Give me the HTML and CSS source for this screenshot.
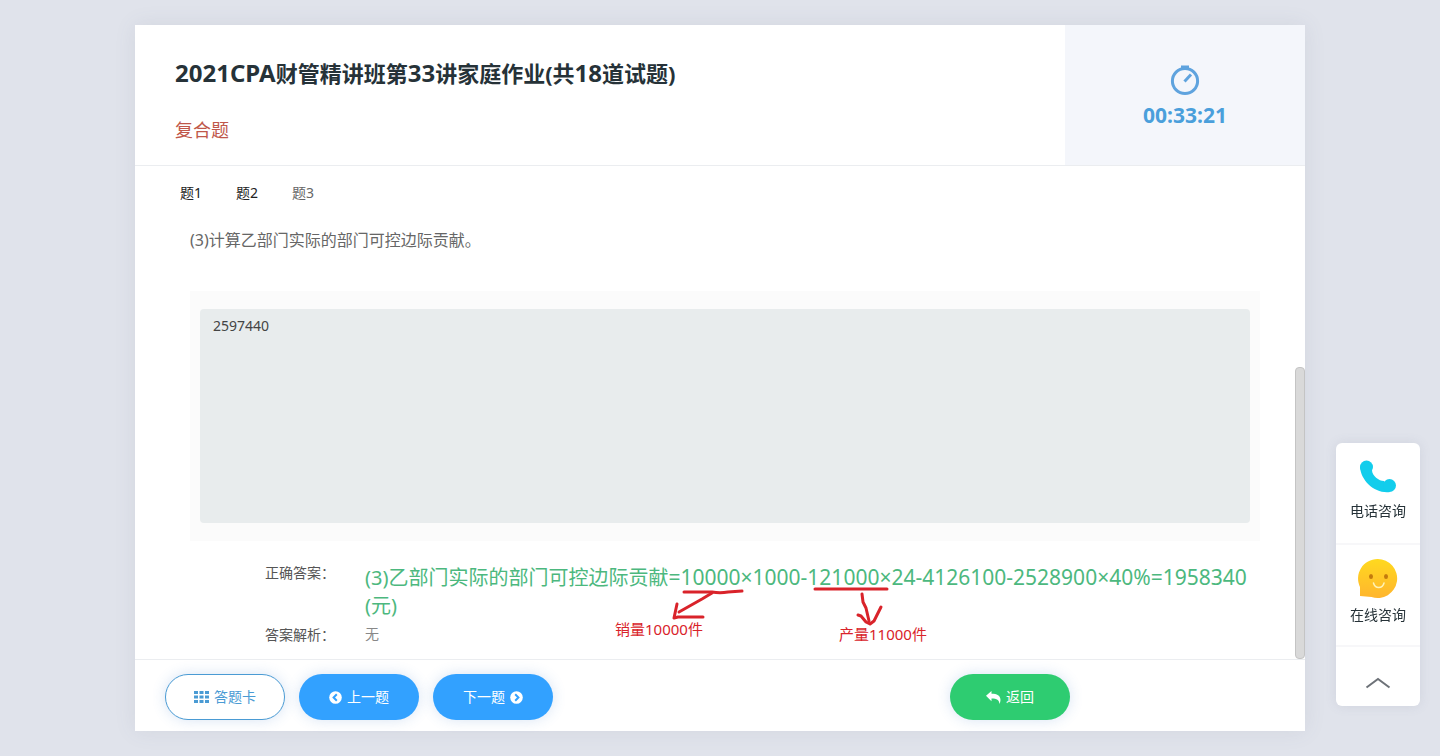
FILE: index.html
```html
<!DOCTYPE html>
<html lang="zh-CN">
<head>
  <meta charset="UTF-8" />
  <meta name="viewport" content="width=device-width, initial-scale=1.0"/>
  <title>2021CPA财管精讲班第33讲家庭作业</title>
  <link rel="stylesheet" href="styles.css">
</head>
<body>
  <div class="paper">
    <header class="paper-header">
      <div class="paper-info">
        <h1><span class="num">2021CPA</span>财管精讲班第<span class="num">33</span>讲家庭作业(共<span class="num">18</span>道试题)</h1>
        <p class="type">复合题</p>
      </div>
      <div class="timer">
        <svg width="30" height="32" viewBox="0 0 30 32" fill="none" stroke="#5fa3de" stroke-width="3">
          <circle cx="15" cy="17" r="12.6"/>
          <path d="M11 3.500h8" stroke-width="4"/>
          <path d="M14.500 17.500l6.500-7"/>
        </svg>
        <span class="time">00:33:21</span>
      </div>
    </header>

    <main class="paper-body">
      <nav class="tabs">
        <a href="#q1">题1</a>
        <a href="#q2">题2</a>
        <a href="#q3" class="current">题3</a>
      </nav>

      <div class="question" id="q3">
        <label class="question-title" for="answer">(3)计算乙部门实际的部门可控边际贡献。</label>
        <div class="answer-box">
          <textarea id="answer" readonly>2597440</textarea>
        </div>
      </div>

      <div class="result">
        <div class="result-row">
          <div class="result-label">正确答案：</div>
          <div class="result-text right-answer">(3)乙部门实际的部门可控边际贡献<span class="formula">=10000×1000-121000×24-4126100-2528900×40%=1958340</span><br>(元)</div>
        </div>
        <div class="result-row">
          <div class="result-label">答案解析：</div>
          <div class="result-text">无</div>
        </div>

        <!-- hand-drawn notes over the answer -->
        <svg class="ink" width="260" height="50" viewBox="0 0 260 50" fill="none" stroke="#d9232a" stroke-width="3" stroke-linecap="round" stroke-linejoin="round">
          <path d="M14 8h28c6 1 10 1 16 0l14-1"/>
          <path d="M42 9L32 15 9 28"/>
          <path d="M7 20L4 34l4-1h25"/>
          <path d="M145 5h72"/>
          <path d="M192 10l1 8 3 6 3 13"/>
          <path d="M188 31l3 1 5 6 4 2 4-3 3-6 4-8"/>
        </svg>
        <span class="note note-sales">销量10000件</span>
        <span class="note note-output">产量11000件</span>
      </div>
      <div class="scroll-thumb"></div>
    </main>

    <footer class="paper-footer">
      <button class="btn btn-outline" type="button">
        <svg width="15" height="12" viewBox="0 0 15 12" fill="currentColor">
          <path d="M0 0h4v3H0zM5.500 0h4v3h-4zM11 0h4v3h-4zM0 4.500h4v3H0zM5.500 4.500h4v3h-4zM11 4.500h4v3h-4zM0 9h4v3H0zM5.500 9h4v3h-4zM11 9h4v3h-4z"/>
        </svg>
        答题卡
      </button>
      <button class="btn btn-blue" type="button">
        <svg width="13" height="13" viewBox="0 0 13 13">
          <circle cx="6.500" cy="6.500" r="6.300" fill="#fff"/>
          <path d="M7.800 3.300L4.600 6.500l3.200 3.200" fill="none" stroke="#32a1ff" stroke-width="2"/>
        </svg>
        上一题
      </button>
      <button class="btn btn-blue" type="button">
        下一题
        <svg width="13" height="13" viewBox="0 0 13 13">
          <circle cx="6.500" cy="6.500" r="6.300" fill="#fff"/>
          <path d="M5.200 3.300l3.200 3.200-3.200 3.200" fill="none" stroke="#32a1ff" stroke-width="2"/>
        </svg>
      </button>
      <button class="btn btn-green" type="button">
        <svg width="15" height="13" viewBox="0 0 15 13" fill="#fff">
          <path d="M0 4.800L5.500 0v2.800c5.500 0 9 1.800 9 6.200 0 1.500-.4 2.800-1 4-.3-3.800-2.500-5.500-8-5.500v2.800z"/>
        </svg>
        返回
      </button>
    </footer>
  </div>

  <aside class="side-bar">
    <a href="#phone" class="side-item">
      <svg width="38" height="36" viewBox="0 0 38 36" fill="#12cdec">
        <path d="M1 8C2 22 16 35 31 33L25 22C20 22 13 17 13 11L8 2z"/>
        <circle cx="7.500" cy="8" r="6.500"/>
        <circle cx="30.500" cy="26.500" r="6.500"/>
      </svg>
      <span>电话咨询</span>
    </a>
    <a href="#online" class="side-item">
      <svg width="40" height="40" viewBox="0 0 40 40">
        <defs>
          <linearGradient id="smile" x1="0" y1="0" x2="0" y2="1">
            <stop offset="0" stop-color="#ffd91f"/>
            <stop offset="1" stop-color="#ffb52e"/>
          </linearGradient>
        </defs>
        <path d="M19.500 0a19.500 19.500 0 1 1-6 38L2 37V28A19.500 19.500 0 0 1 19.500 0z" fill="url(#smile)"/>
        <ellipse cx="13" cy="17.500" rx="2" ry="2.600" fill="#c37a0d"/>
        <ellipse cx="28" cy="17.500" rx="2" ry="2.600" fill="#c37a0d"/>
        <path d="M15.500 24c1.500 6 9 6 10.500 0" fill="none" stroke="#fff3b8" stroke-width="1.500" stroke-linecap="round"/>
      </svg>
      <span>在线咨询</span>
    </a>
    <button class="side-top" type="button" aria-label="返回顶部">
      <svg width="26" height="12" viewBox="0 0 26 12" fill="none" stroke="#6d7278" stroke-width="2">
        <path d="M1.500 10.500L13 2l11.500 8.500"/>
      </svg>
    </button>
  </aside>
</body>
</html>
```
FILE: styles.css
```css
* {
  box-sizing: border-box;
}

body {
  margin: 0;
  padding: 25px 0;
  height: 100vh;
  background-color: #e0e3eb;
  font-family: "Noto Sans", "Noto Sans CJK SC", sans-serif;
  font-size: 14px;
  line-height: 20px;
  color: #555;
}

a {
  color: inherit;
  text-decoration: none;
}

.paper {
  display: flex;
  flex-direction: column;
  max-width: 1170px;
  height: 100%;
  margin: 0 auto;
  background-color: #fff;
  box-shadow: 0 0 20px rgba(90, 100, 130, 0.1);
}

.paper-header {
  display: flex;
  border-bottom: 1px solid #ebedf0;
}

.paper-info {
  flex: 1;
  padding: 31px 40px 20px;
}

.paper-info h1 {
  margin: 0 0 25px;
  font-size: 22px;
  line-height: 34px;
  font-weight: bold;
  color: #263238;
}

.paper-info h1 .num {
  font-size: 24px;
  line-height: 24px;
}

.type {
  margin: 0;
  font-size: 18px;
  line-height: 30px;
  color: #c0574a;
}

.timer {
  display: flex;
  flex-direction: column;
  align-items: center;
  justify-content: center;
  gap: 4px;
  width: 240px;
  padding-top: 4px;
  background-color: #f4f6fb;
}

.time {
  font-size: 21px;
  line-height: 30px;
  font-weight: bold;
  color: #4a9fdb;
}

.paper-body {
  position: relative;
  flex: 1;
  padding: 17px 45px 0;
}

.tabs {
  display: flex;
  gap: 34px;
  color: #222;
}

.tabs .current {
  color: #666;
}

.question {
  padding: 24px 0 0 10px;
}

.question-title {
  display: block;
  margin-bottom: 38px;
  font-size: 16px;
  line-height: 26px;
  color: #666;
}

.answer-box {
  padding: 18px 10px;
  background-color: #fbfbfb;
}

.answer-box textarea {
  display: block;
  width: 100%;
  height: 214px;
  padding: 6px 13px;
  border: none;
  border-radius: 4px;
  resize: none;
  outline: none;
  background-color: #e8eced;
  font: inherit;
  line-height: 22px;
  color: #444;
}

.result {
  position: relative;
  padding: 20px 0 0 85px;
}

.result-row {
  display: flex;
  margin-bottom: 3px;
}

.result-label {
  width: 100px;
  line-height: 24px;
}

.result-text {
  flex: 1;
  line-height: 22px;
  color: #888;
}

.right-answer {
  padding-top: 2px;
  font-size: 20px;
  line-height: 28px;
  color: #4cb87e;
}

.formula {
  font-size: 21px;
}

.ink {
  position: absolute;
  left: 490px;
  top: 43px;
}

.note {
  position: absolute;
  font-size: 15px;
  color: #d9232a;
}

.note-sales {
  left: 435px;
  top: 78px;
}

.note-output {
  left: 659px;
  top: 83px;
}

.scroll-thumb {
  position: absolute;
  right: 0;
  bottom: 0;
  width: 10px;
  height: 292px;
  border: 1px solid #c4c4c4;
  border-radius: 4px;
  background-color: #d9d9d9;
}

.paper-footer {
  display: flex;
  gap: 14px;
  padding: 14px 235px 11px 30px;
  border-top: 1px solid #ebedf0;
}

.btn {
  display: flex;
  align-items: center;
  justify-content: center;
  gap: 5px;
  width: 120px;
  height: 46px;
  border: none;
  border-radius: 23px;
  box-shadow: 0 0 14px rgba(60, 120, 200, 0.2);
  font: inherit;
  color: #fff;
  cursor: pointer;
}

.btn-outline {
  border: 1px solid #4a9bd4;
  background-color: #fff;
  color: #4a9bd4;
}

.btn-blue {
  background-color: #32a1ff;
}

.btn-green {
  margin-left: auto;
  background-color: #2ecc71;
}

.side-bar {
  position: fixed;
  right: 20px;
  bottom: 50px;
  width: 84px;
  border-radius: 6px;
  background-color: #fff;
  box-shadow: 0 0 12px rgba(90, 100, 130, 0.12);
  color: #263238;
}

.side-item {
  display: flex;
  flex-direction: column;
  align-items: center;
  justify-content: center;
  gap: 6px;
  height: 102px;
  padding-bottom: 7px;
  border-bottom: 2px solid #f7f7f9;
}

.side-top {
  display: flex;
  align-items: center;
  justify-content: center;
  width: 100%;
  height: 59px;
  padding: 12px 0 0;
  border: none;
  background: none;
  cursor: pointer;
}
```
